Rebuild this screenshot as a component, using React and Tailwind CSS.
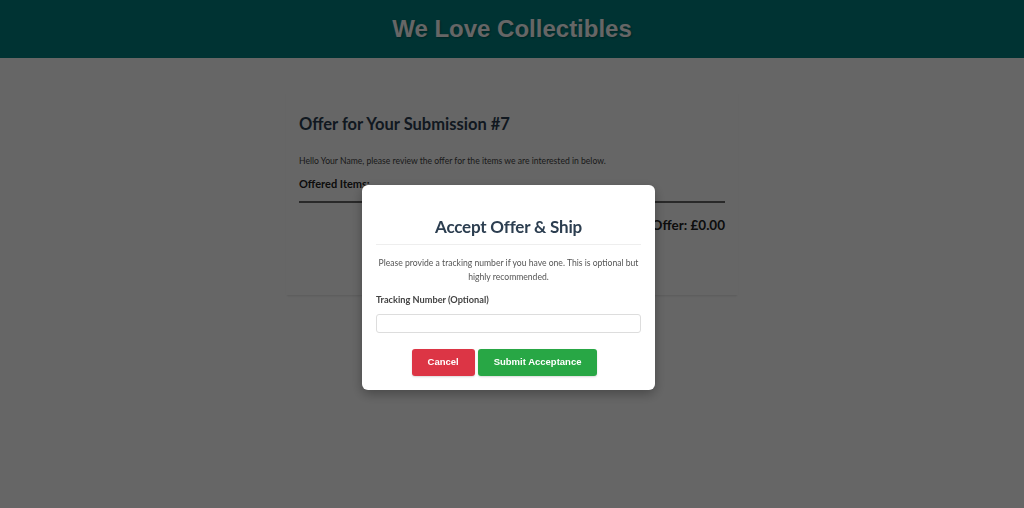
import React from "react";

const sans = "font-['Lato','Noto_Sans','Liberation_Sans',sans-serif]";

const App = () => {
  return (
    <div className={`min-h-screen bg-white ${sans}`}>
      <header className="bg-[#008080] h-[58px] flex items-center justify-center">
        <h1 className="font-['Liberation_Sans',Arial,sans-serif] text-[24px] font-bold text-white [text-shadow:1px_1px_2px_rgba(0,0,0,0.3)]">
          We Love Collectibles
        </h1>
      </header>

      <main className="pt-[32px] pb-10">
        <div className="mx-auto w-[452px] bg-white px-[13px] pt-[22px] pb-[61px] shadow-[0_2px_2px_-1px_rgba(0,0,0,0.12)]">
          <h2 className="text-[16.5px] font-bold text-[#2c3e50] leading-[24px]">
            Offer for Your Submission #7
          </h2>
          <p className="mt-[18px] text-[8.6px] text-[#444] leading-[14px]">
            Hello Your Name, please review the offer for the items we are
            interested in below.
          </p>
          <h3 className="mt-[8px] text-[11px] font-bold text-[#222] leading-[16px]">
            Offered Items:
          </h3>
          <div className="mt-[9px] border-b-2 border-[#666]" />
          <p className="mt-[13px] text-right text-[13.5px] font-bold text-[#222] leading-[18px]">
            Total Offer: £0.00
          </p>
        </div>
      </main>

      <div className="fixed inset-0 bg-black/60 flex justify-center items-start pt-[185px] pr-[7px]">
        <div className="w-[293px] bg-white rounded-md px-[14px] pt-[30px] pb-[14px] shadow-[0_4px_12px_rgba(0,0,0,0.3)]">
          <h2 className="text-center text-[17px] tracking-[-0.2px] font-bold text-[#2c3e50] leading-[24px] pb-[5px] border-b border-[#eee]">
            Accept Offer &amp; Ship
          </h2>
          <p className="mt-[11px] text-center text-[8.6px] text-[#555] leading-[14px]">
            Please provide a tracking number if you have one. This is optional
            but highly recommended.
          </p>
          <label className="block mt-[10px] text-[9.2px] font-bold text-[#444] leading-[12px]">
            Tracking Number (Optional)
          </label>
          <input
            type="text"
            className="block mt-[8px] w-full h-[19px] border border-[#ddd] rounded-[3px] px-2 text-[9px]"
          />
          <div className="mt-[16px] flex justify-center gap-[3px] pr-[8px]">
            <button className="h-[27px] px-4 rounded-[3px] bg-[#dc3545] text-white text-[9.5px] font-bold font-['Liberation_Sans',Arial,sans-serif] shadow-[0_1px_2px_rgba(0,0,0,0.15)]">
              Cancel
            </button>
            <button className="h-[27px] px-4 rounded-[3px] bg-[#28a745] text-white text-[9.5px] font-bold font-['Liberation_Sans',Arial,sans-serif] shadow-[0_1px_2px_rgba(0,0,0,0.15)]">
              Submit Acceptance
            </button>
          </div>
        </div>
      </div>
    </div>
  );
};

export default App;
